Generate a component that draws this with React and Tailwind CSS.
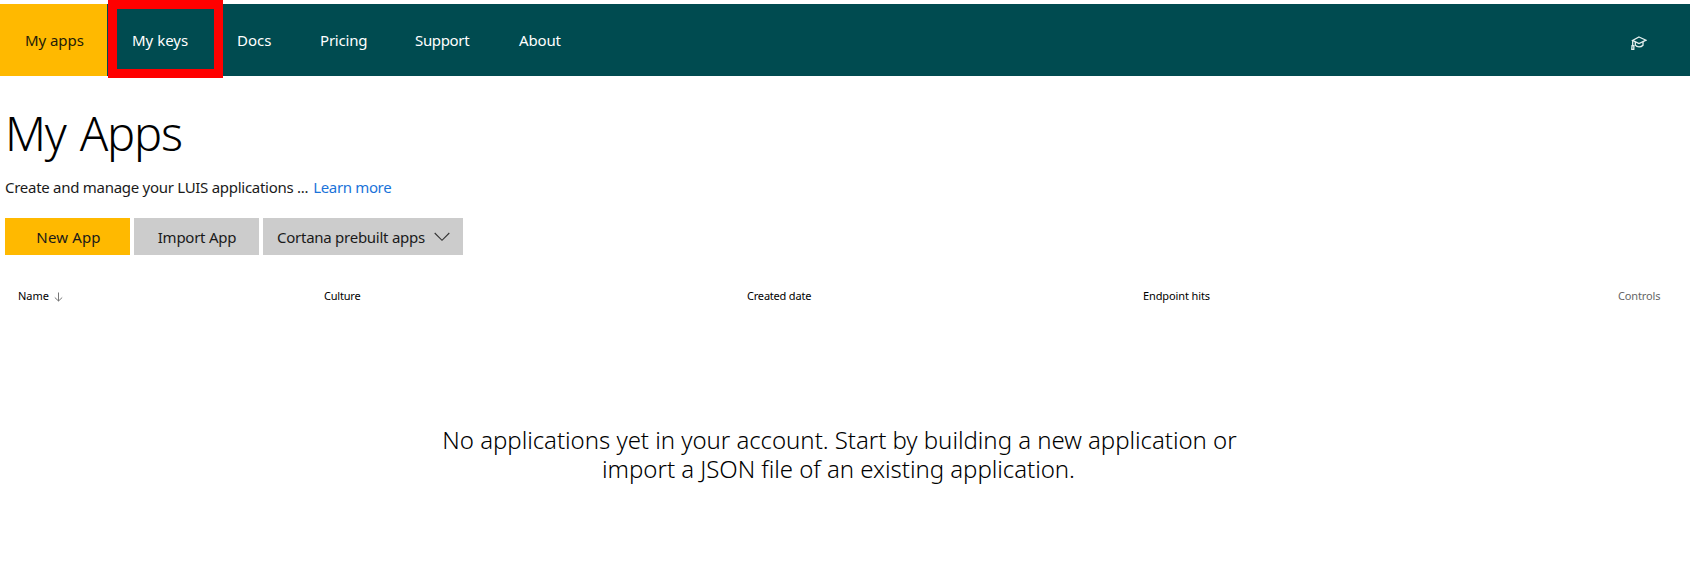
import React from "react";

const navLink = "flex h-full items-center text-white";

function GraduationIcon() {
  return (
    <svg width="16" height="15" viewBox="0 0 16 15" fill="none" stroke="#e6f0f0" strokeWidth="1.3" className="block">
      <path d="M8 1 L15 4.2 L8 7.6 L1.6 4.4 Z" />
      <path d="M4.3 6 V9.2 C6 11.4 10 11.4 12 9.2 V6" />
      <path d="M1.7 4.6 V10.2" />
      <path d="M1 9.6 H2.9 L2.8 13.4 H0.8 Z" />
    </svg>
  );
}

function NavBar() {
  return (
    <nav className="flex h-[72px] bg-[#004b50] text-[15px] leading-none">
      <a className="flex h-full w-[107px] items-center bg-[#ffb900] pl-[25px] tracking-[-0.05px] text-[#241c08]">My apps</a>
      <a className={`${navLink} w-[130px] pl-[25px]`}>My keys</a>
      <a className={`${navLink} w-[83px]`}>Docs</a>
      <a className={`${navLink} w-[95px] tracking-[-0.2px]`}>Pricing</a>
      <a className={`${navLink} w-[104px] tracking-[-0.35px]`}>Support</a>
      <a className={`${navLink} tracking-[-0.15px]`}>About</a>
      <div className="ml-auto flex h-full w-[59px] items-center pt-[6px]">
        <GraduationIcon />
      </div>
    </nav>
  );
}

function Toolbar() {
  return (
    <div className="mt-[19px] flex h-[37px] gap-1 pl-[5px] text-[15px] leading-none text-[#1a1a1a]">
      <button className="w-[125px] bg-[#ffb900] pt-px pl-0.5 tracking-[0.15px]">New App</button>
      <button className="w-[125px] bg-[#ccc] pt-px pl-px tracking-[-0.25px]">Import App</button>
      <button className="flex w-[200px] items-center bg-[#ccc] pl-[14px] tracking-[-0.26px]">
        <span className="w-[157px] pt-px text-left">Cortana prebuilt apps</span>
        <svg width="16" height="10" viewBox="0 0 16 10" fill="none" stroke="#333" strokeWidth="1.1">
          <path d="M0.7 1 L8 8.3 L15.3 1" />
        </svg>
      </button>
    </div>
  );
}

function TableHead() {
  return (
    <div className="mt-[30px] flex h-5 items-center pl-[18px] text-[11px] leading-none text-black">
      <div className="flex w-[306px] items-center">
        <span>Name</span>
        <svg width="9" height="10" viewBox="0 0 9 10" fill="none" stroke="#777" strokeWidth="1" className="mt-1 ml-[5px]">
          <path d="M4.5 0.5 V9 M0.8 5.5 L4.5 9 L8.2 5.5" />
        </svg>
      </div>
      <span className="w-[423px] tracking-[-0.2px]">Culture</span>
      <span className="w-[396px] tracking-[-0.2px]">Created date</span>
      <span className="w-[475px] tracking-[-0.12px]">Endpoint hits</span>
      <span className="tracking-[-0.15px] text-[#666]">Controls</span>
    </div>
  );
}

export default function App() {
  return (
    <div className="relative h-[587px] w-[1690px] overflow-hidden bg-white pt-1 font-['Noto_Sans',sans-serif]">
      <NavBar />
      <div className="absolute top-0 left-[108px] h-[78px] w-[115px] border-9 border-[#ff0000]" />
      <h1 className="mt-[27px] pl-[5px] text-[47px] leading-[60px] font-light tracking-[-1.2px] text-black [word-spacing:3px]">My Apps</h1>
      <p className="mt-[12px] pl-[5px] text-[15px] leading-6 tracking-[-0.28px] text-[#1a1a1a]">
        Create and manage your LUIS applications ...
        <a className="ml-[5px] tracking-[-0.35px] text-[#1a73d9]">Learn more</a>
      </p>
      <Toolbar />
      <TableHead />
      <p className="mt-[120px] flex flex-col items-center pr-[11px] text-2xl leading-[29px] font-light tracking-[-0.04px] text-black">
        <span>No applications yet in your account. Start by building a new application or</span>
        <span className="pr-0.5">import a JSON file of an existing application.</span>
      </p>
    </div>
  );
}
